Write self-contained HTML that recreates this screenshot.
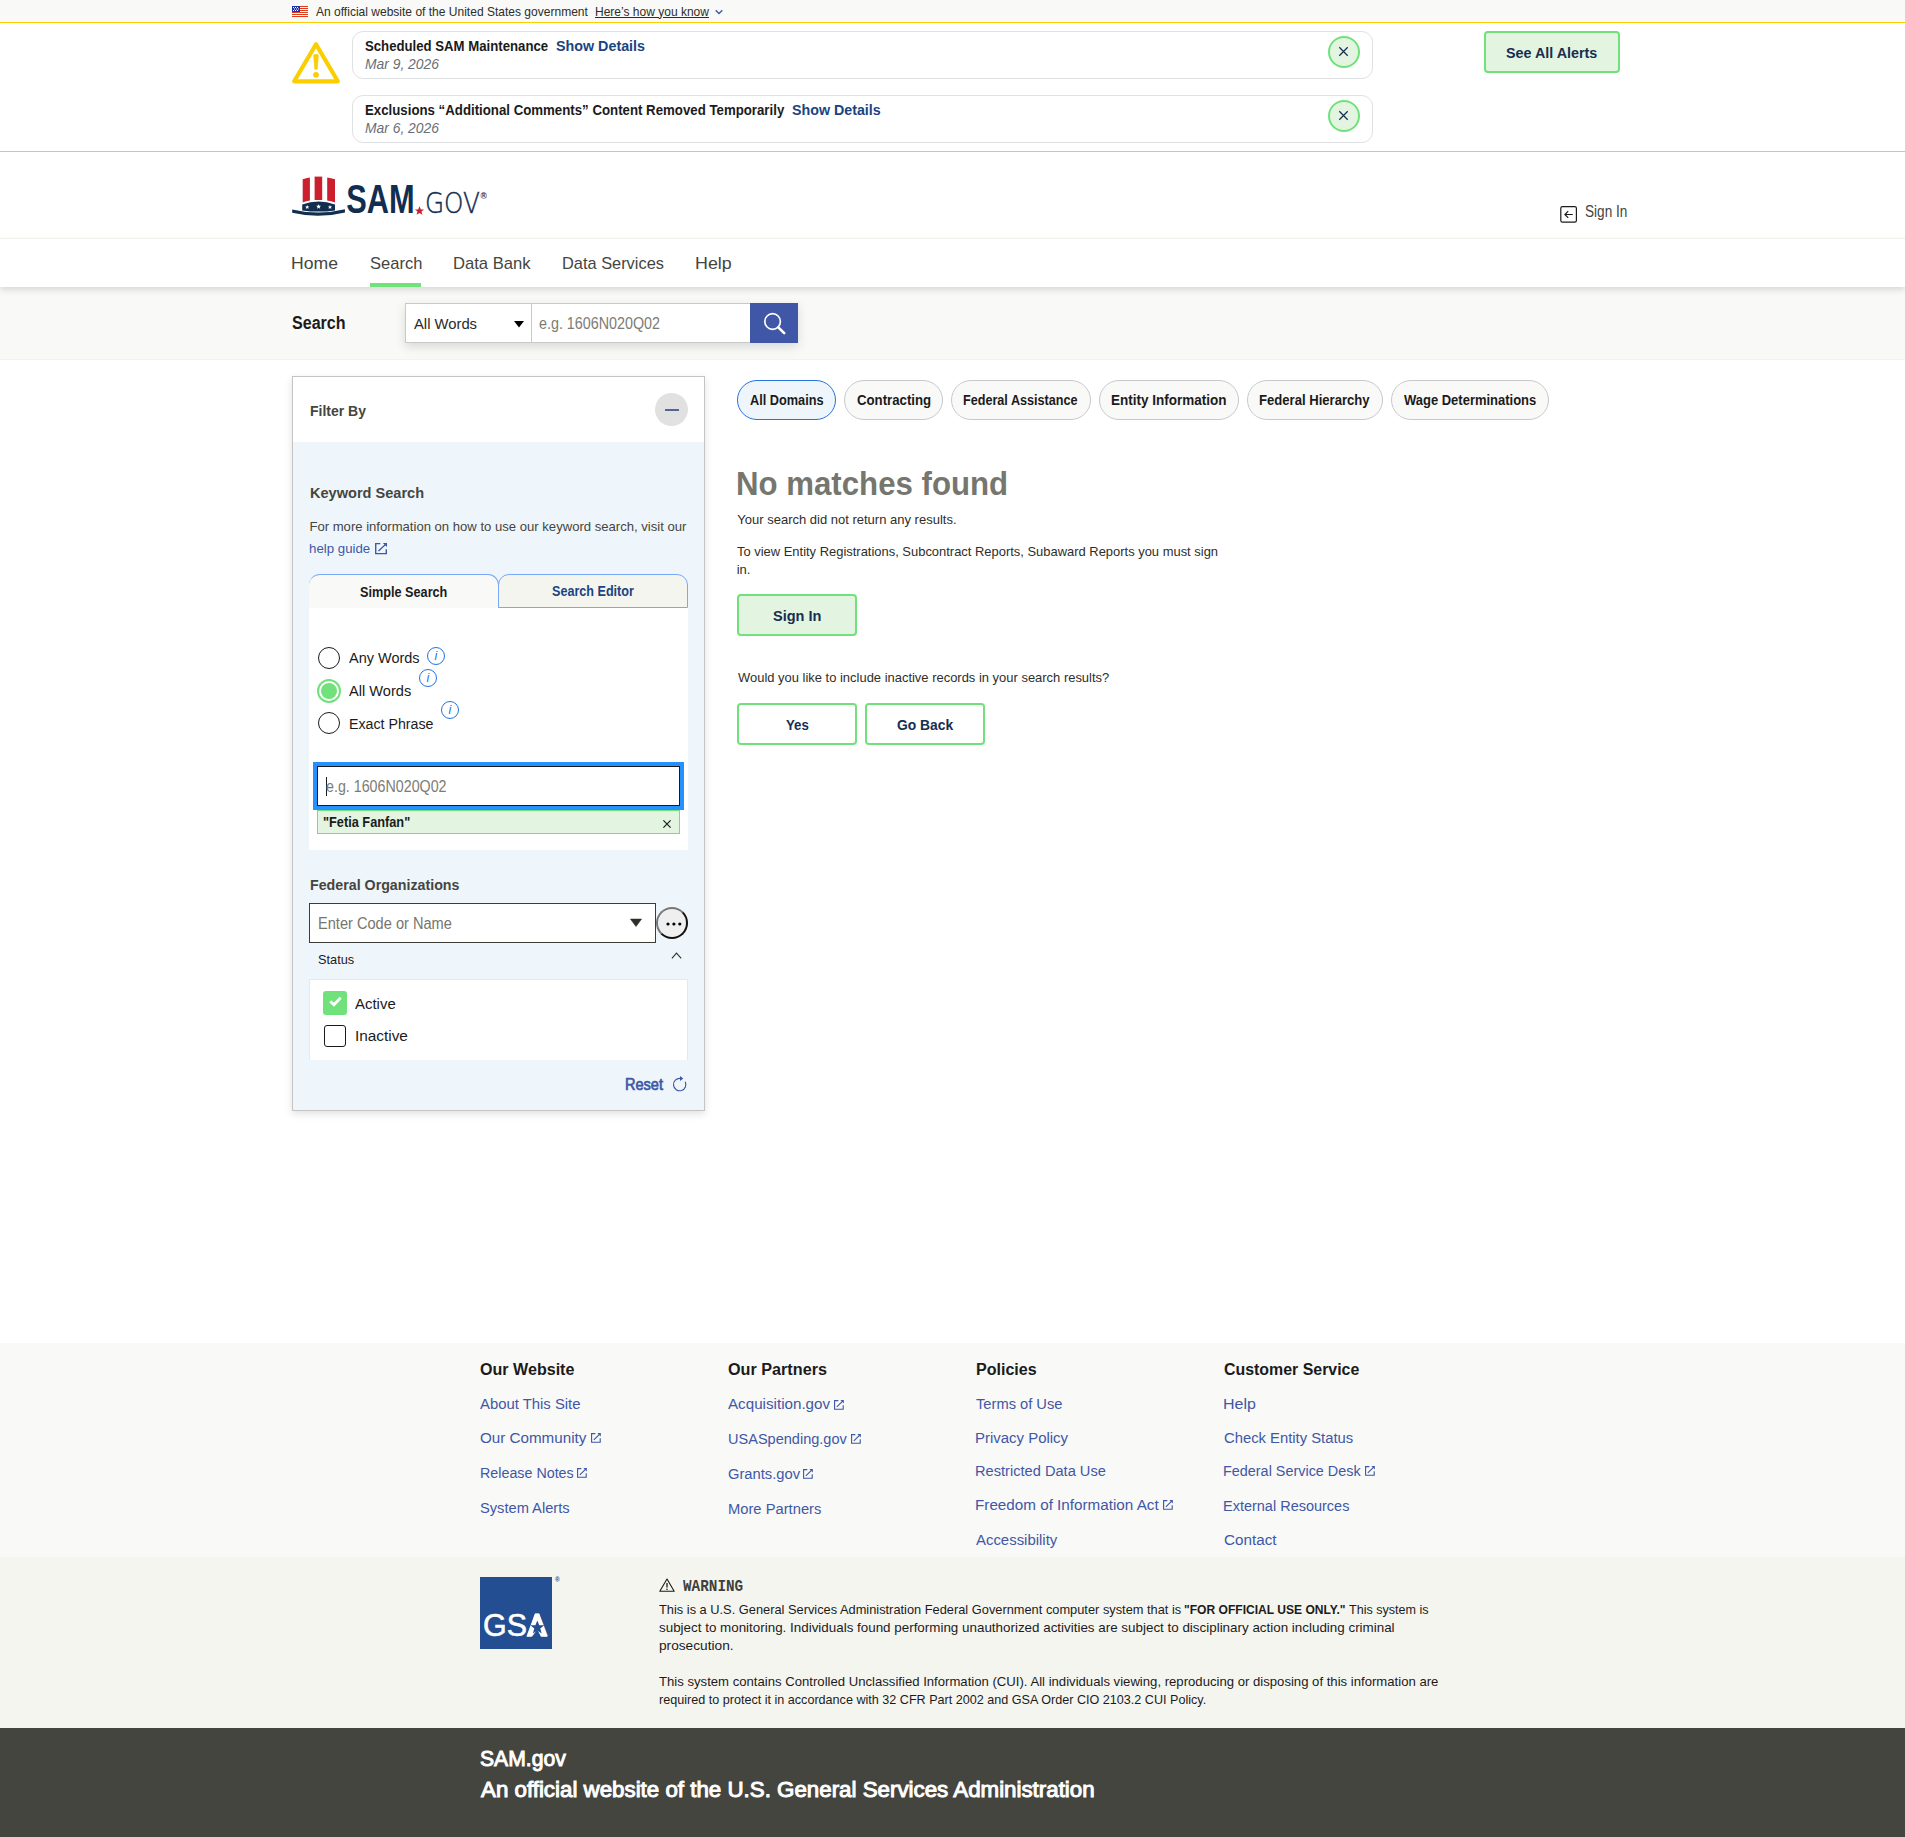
<!DOCTYPE html><html lang="en"><head><meta charset="utf-8"><title>SAM.gov | Search</title><style>
*{box-sizing:border-box;margin:0;padding:0}
html,body{width:1905px;height:1837px;background:#fff;overflow:hidden}
body{position:relative;font-family:"Liberation Sans",sans-serif;color:#1b1b1b;-webkit-font-smoothing:antialiased}
.t{position:absolute;white-space:nowrap;display:block;transform-origin:0 50%}
.a{position:absolute;display:block}
a{color:inherit;text-decoration:none}
button{font-family:inherit;border:0;background:none}
svg{position:absolute;overflow:visible}
ul{list-style:none}
</style></head><body><section aria-label="Official government website"><div class="a"  style="left:0px;top:0px;width:1905px;height:22px;background:#f9f9f7"></div><svg style="left:292px;top:6px" width="16" height="11" viewBox="0 0 16 11">
<rect width="16" height="11" fill="#fff"/>
<g fill="#db3e1f"><rect y="0" width="16" height="1"/><rect y="2" width="16" height="1"/><rect y="4" width="16" height="1"/><rect y="6" width="16" height="1"/><rect y="8" width="16" height="1"/><rect y="10" width="16" height="1"/></g>
<rect width="8" height="6" fill="#1e33b1"/>
<g fill="#fff"><rect x="1" y="1" width="1" height="1"/><rect x="3" y="1" width="1" height="1"/><rect x="5" y="1" width="1" height="1"/><rect x="2" y="2.5" width="1" height="1"/><rect x="4" y="2.5" width="1" height="1"/><rect x="6" y="2.5" width="1" height="1"/><rect x="1" y="4" width="1" height="1"/><rect x="3" y="4" width="1" height="1"/><rect x="5" y="4" width="1" height="1"/></g>
</svg><p class="t"  style="left:315.98px;top:3.53px;line-height:16px;font-size:12.9px;font-weight:400;color:#2e2e2a;transform:scaleX(0.9330);">An official website of the United States government</p><button class="t"  style="left:595.01px;top:3.53px;line-height:16px;font-size:12.9px;font-weight:400;color:#2e2e2a;transform:scaleX(0.9319);text-decoration:underline;text-underline-offset:1px;">Here’s how you know</button><svg style="left:715.3px;top:9px" width="8" height="6" viewBox="0 0 8 6"><path d="M0.7 1.2 L4 4.5 L7.3 1.2" fill="none" stroke="#3f57a6" stroke-width="1.3"/></svg></section><section aria-label="Alerts"><div class="a"  style="left:0px;top:22px;width:1905px;height:1px;background:#face00"></div><div class="a"  style="left:0px;top:151px;width:1905px;height:1px;background:#face00"></div><svg style="left:292px;top:41px" width="48" height="43" viewBox="0 0 48 43">
<path d="M24 3.3 L45.8 40.3 H2.2 Z" fill="none" stroke="#face00" stroke-width="4.2" stroke-linejoin="round"/>
<path d="M21.6 14 Q24 12.6 26.4 14 L25.3 28 Q24 28.8 22.7 28 Z" fill="#face00" stroke="#face00" stroke-width="0.6" stroke-linejoin="round"/><circle cx="24" cy="33.8" r="2.9" fill="#face00"/></svg><div class="a"  style="left:352px;top:31px;width:1021px;height:48px;border:1px solid #dfe1e2;border-radius:11px;background:#fff"></div><strong class="t"  style="left:365.12px;top:36.94px;line-height:18px;font-size:14.6px;font-weight:700;color:#1b1b1b;transform:scaleX(0.9031);">Scheduled SAM Maintenance</strong><a class="t" href="#" style="left:556.09px;top:36.94px;line-height:18px;font-size:14.6px;font-weight:700;color:#1a4480;transform:scaleX(0.9799);">Show Details</a><em class="t"  style="left:365.07px;top:54.94px;line-height:18px;font-size:14.6px;font-weight:400;font-style:italic;color:#696e76;transform:scaleX(0.9493);">Mar 9, 2026</em><button class="a" aria-label="Close" style="left:1328px;top:36px;width:32px;height:32px;border:2px solid #70e17b;border-radius:50%;background:#e3f5e1"><svg style="left:8.8px;top:8.7px" width="9" height="9" viewBox="0 0 9 9"><path d="M0.3 0.3 L8.7 8.7 M8.7 0.3 L0.3 8.7" stroke="#162e51" stroke-width="1.25"/></svg></button><div class="a"  style="left:352px;top:95px;width:1021px;height:48px;border:1px solid #dfe1e2;border-radius:11px;background:#fff"></div><strong class="t"  style="left:364.61px;top:100.94px;line-height:18px;font-size:14.6px;font-weight:700;color:#1b1b1b;transform:scaleX(0.9076);">Exclusions “Additional Comments” Content Removed Temporarily</strong><a class="t" href="#" style="left:792.39px;top:100.94px;line-height:18px;font-size:14.6px;font-weight:700;color:#1a4480;transform:scaleX(0.9765);">Show Details</a><em class="t"  style="left:365.07px;top:118.94px;line-height:18px;font-size:14.6px;font-weight:400;font-style:italic;color:#696e76;transform:scaleX(0.9493);">Mar 6, 2026</em><button class="a" aria-label="Close" style="left:1328px;top:100px;width:32px;height:32px;border:2px solid #70e17b;border-radius:50%;background:#e3f5e1"><svg style="left:8.8px;top:8.7px" width="9" height="9" viewBox="0 0 9 9"><path d="M0.3 0.3 L8.7 8.7 M8.7 0.3 L0.3 8.7" stroke="#162e51" stroke-width="1.25"/></svg></button><button class="a"  style="left:1484px;top:31px;width:136px;height:42px;border:2px solid #70e17b;border-radius:4px;background:#e3f5e1"></button><span class="t"  style="left:1506.29px;top:43.67px;line-height:18px;font-size:14.8px;font-weight:700;color:#162e51;transform:scaleX(0.9675);">See All Alerts</span></section><header><a href="#" aria-label="SAM.gov"><svg style="left:292px;top:176px" width="196" height="40" viewBox="0 0 196 40">
<g fill="#cc1f2d"><path d="M10.7 3.3 Q14 1.8 17.9 1.4 V24.4 Q14 24.9 10.7 26.4 Z"/><path d="M22.6 0.6 H30.2 V24 H22.6 Z"/><path d="M35.2 1.4 Q39 1.8 43 3.3 V26.4 Q39 24.9 35.2 24.4 Z"/></g>
<path d="M10.2 28.6 Q26.6 22.4 43 28.6 V34.4 Q26.6 36.8 10.2 34.4 Z" fill="#112e51"/>
<path d="M0.2 33.4 Q26.6 39.8 52.9 33.3 L53 36.4 Q26.6 43 0.2 36.8 Z" fill="#112e51"/>
<g fill="#fff"><path d="M0 -2.1 L0.62 -0.65 L2.1 -0.65 L0.95 0.3 L1.35 1.8 L0 0.9 L-1.35 1.8 L-0.95 0.3 L-2.1 -0.65 L-0.62 -0.65 Z" transform="translate(15.2 31.2)"/><path d="M0 -2.1 L0.62 -0.65 L2.1 -0.65 L0.95 0.3 L1.35 1.8 L0 0.9 L-1.35 1.8 L-0.95 0.3 L-2.1 -0.65 L-0.62 -0.65 Z" transform="translate(26.6 30.6) scale(1.15)"/><path d="M0 -2.1 L0.62 -0.65 L2.1 -0.65 L0.95 0.3 L1.35 1.8 L0 0.9 L-1.35 1.8 L-0.95 0.3 L-2.1 -0.65 L-0.62 -0.65 Z" transform="translate(38 31.2)"/></g>
<text x="54.3" y="36.6" font-family="Liberation Sans, sans-serif" font-weight="700" font-size="39.8" fill="#112e51" textLength="68.4" lengthAdjust="spacingAndGlyphs">SAM</text>
<path d="M0 -4.6 L1.3 -1.45 L4.6 -1.45 L2 0.6 L2.9 3.9 L0 2 L-2.9 3.9 L-2 0.6 L-4.6 -1.45 L-1.3 -1.45 Z" transform="translate(127.5 34.9)" fill="#cc1f2d"/>
<text x="133" y="36.9" font-family="DejaVu Sans, sans-serif" font-weight="200" font-size="28.5" fill="#112e51" stroke="#112e51" stroke-width="0.45" textLength="55" lengthAdjust="spacingAndGlyphs">GOV</text>
<text x="188.6" y="23.4" font-family="Liberation Sans, sans-serif" font-size="8.5" font-weight="700" fill="#112e51">®</text>
</svg></a><svg style="left:1560px;top:206px" width="18" height="18" viewBox="0 0 18 18"><rect x="0.8" y="0.6" width="15.6" height="15.6" rx="1.6" fill="none" stroke="#1b1b1b" stroke-width="1.2"/><path d="M12.8 8.5 H5 M8.2 5.2 L4.9 8.5 L8.2 11.8" fill="none" stroke="#1b1b1b" stroke-width="1.2"/></svg><a class="t" href="#" style="left:1585.38px;top:202.02px;line-height:20px;font-size:15.8px;font-weight:400;color:#454540;transform:scaleX(0.8601);">Sign In</a><div class="a"  style="left:0px;top:238px;width:1905px;height:1px;background:#f3f3ee"></div></header><div class="a"  style="left:0px;top:287px;width:1905px;height:73px;background:#f9f9f7;border-bottom:1px solid #f3f3ee"></div><nav><div class="a"  style="left:0px;top:239px;width:1905px;height:48px;background:#fff;box-shadow:0 3px 6px rgba(0,0,0,.13)"></div><a class="t" href="#" style="left:291.06px;top:252.81px;line-height:21px;font-size:17px;font-weight:400;color:#454540;transform:scaleX(1.0359);">Home</a><a class="t" href="#" style="left:369.50px;top:252.81px;line-height:21px;font-size:17px;font-weight:400;color:#454540;transform:scaleX(0.9714);">Search</a><a class="t" href="#" style="left:452.64px;top:252.81px;line-height:21px;font-size:17px;font-weight:400;color:#454540;transform:scaleX(0.9774);">Data Bank</a><a class="t" href="#" style="left:561.91px;top:252.81px;line-height:21px;font-size:17px;font-weight:400;color:#454540;transform:scaleX(0.9633);">Data Services</a><a class="t" href="#" style="left:694.54px;top:252.81px;line-height:21px;font-size:17px;font-weight:400;color:#454540;transform:scaleX(1.0501);">Help</a><div class="a"  style="left:370px;top:283px;width:51px;height:4px;background:#70e17b"></div></nav><section aria-label="Search"><label class="t"  style="left:291.94px;top:312.40px;line-height:22px;font-size:17.6px;font-weight:700;color:#1b1b1b;transform:scaleX(0.9127);">Search</label><div class="a"  style="left:405px;top:303px;width:393px;height:40px;box-shadow:0 4px 10px rgba(0,0,0,.13);background:#fff"></div><div class="a"  style="left:405px;top:303px;width:127px;height:40px;border:1px solid #c9c9c9;background:#fff"></div><span class="t"  style="left:413.97px;top:315.07px;line-height:18px;font-size:14.8px;font-weight:400;color:#2a2a2a;">All Words</span><svg style="left:514px;top:321.2px" width="10" height="7" viewBox="0 0 10 7"><path d="M0 0 H10 L5 6.4 Z" fill="#000"/></svg><div class="a"  style="left:531px;top:303px;width:220px;height:40px;border:1px solid #c9c9c9;background:#fff"></div><span class="t"  style="left:539.39px;top:313.79px;line-height:20px;font-size:15.6px;font-weight:400;color:#7c7c75;transform:scaleX(0.9176);">e.g. 1606N020Q02</span><button class="a" aria-label="Search" style="left:750px;top:303px;width:48px;height:40px;background:#3f57a6"><svg style="left:0;top:0" width="48" height="40" viewBox="0 0 48 40"><circle cx="22.6" cy="18.5" r="7.8" fill="none" stroke="#fff" stroke-width="1.7"/><path d="M28.3 24.3 L34.2 30.2" stroke="#fff" stroke-width="2.6" stroke-linecap="round"/></svg></button></section><aside aria-label="Filters"><div class="a"  style="left:292px;top:376px;width:413px;height:735px;border:1px solid #c4c4c4;background:#eff6fb;box-shadow:0 3px 8px rgba(0,0,0,.12)"></div><div class="a"  style="left:293px;top:377px;width:411px;height:65px;background:#fff"></div><h2 class="t"  style="left:309.56px;top:402.24px;line-height:18px;font-size:14.6px;font-weight:700;color:#454540;transform:scaleX(0.9593);">Filter By</h2><button class="a" aria-label="Collapse" style="left:655px;top:393px;width:33px;height:33px;border-radius:50%;background:#e1e1e1"><svg style="left:9.5px;top:15.5px" width="14" height="2" viewBox="0 0 14 2"><path d="M0 1 H14" stroke="#14336b" stroke-width="1.4"/></svg></button><h3 class="t"  style="left:309.53px;top:484.20px;line-height:18px;font-size:14.7px;font-weight:700;color:#454540;transform:scaleX(0.9911);">Keyword Search</h3><p><span class="t"  style="left:309.43px;top:518.76px;line-height:16px;font-size:13.1px;font-weight:400;color:#454540;">For more information on how to use our keyword search, visit our</span><a class="t" href="#" style="left:309.38px;top:540.66px;line-height:16px;font-size:13.1px;font-weight:400;color:#3f57a6;transform:scaleX(1.0129);">help guide</a><svg style="left:375px;top:542.8px;color:#3f57a6" width="12" height="11.4" viewBox="0 0 10 10" preserveAspectRatio="none"><path d="M4.4 0.6 H0.6 V9.4 H9.4 V5.4 M2.9 7.1 L8.6 1.4" fill="none" stroke="currentColor" stroke-width="1.15"/><path d="M6.5 0 H10 V3.5 Z" fill="currentColor"/></svg></p><div class="a"  style="left:309px;top:607px;width:379px;height:243px;background:#fff"></div><div class="a"  style="left:309px;top:574px;width:190px;height:34px;border-top:1px solid #7aa7f8;border-right:1px solid #7aa7f8;border-radius:11px 11px 0 0;background:#f9f9f7"></div><div class="a"  style="left:498px;top:574px;width:190px;height:34px;border:1px solid #7aa7f8;border-radius:11px 11px 0 0;background:#f5f5f0"></div><button class="t"  style="left:359.73px;top:582.75px;line-height:18px;font-size:14px;font-weight:700;color:#1b1b1b;transform:scaleX(0.9053);">Simple Search</button><button class="t"  style="left:552.14px;top:582.15px;line-height:18px;font-size:14px;font-weight:700;color:#1a4480;transform:scaleX(0.8992);">Search Editor</button><div class="a"  style="left:318px;top:647px;width:22px;height:22px;border:1.4px solid #1b1b1b;border-radius:50%;background:#fff"></div><label class="t"  style="left:349.27px;top:647.96px;line-height:19px;font-size:15.4px;font-weight:400;color:#1b1b1b;transform:scaleX(0.9409);">Any Words</label><svg style="left:427.4px;top:647.4px" width="18" height="18" viewBox="0 0 18 18"><circle cx="9" cy="9" r="8.5" fill="none" stroke="#2672de" stroke-width="1"/><text x="8.8" y="13.2" text-anchor="middle" font-family="Liberation Sans, sans-serif" font-style="italic" font-size="12.6" fill="#2672de">i</text></svg><div class="a"  style="left:317px;top:679px;width:24px;height:24px;border:2px solid #70e17b;border-radius:50%;background:#fff"></div><div class="a"  style="left:321px;top:683px;width:16px;height:16px;border-radius:50%;background:#70e17b"></div><label class="t"  style="left:349.27px;top:680.96px;line-height:19px;font-size:15.4px;font-weight:400;color:#1b1b1b;transform:scaleX(0.9495);">All Words</label><svg style="left:419.3px;top:668.7px" width="18" height="18" viewBox="0 0 18 18"><circle cx="9" cy="9" r="8.5" fill="none" stroke="#2672de" stroke-width="1"/><text x="8.8" y="13.2" text-anchor="middle" font-family="Liberation Sans, sans-serif" font-style="italic" font-size="12.6" fill="#2672de">i</text></svg><div class="a"  style="left:318px;top:712px;width:22px;height:22px;border:1.4px solid #1b1b1b;border-radius:50%;background:#fff"></div><label class="t"  style="left:349.23px;top:714.06px;line-height:19px;font-size:15.4px;font-weight:400;color:#1b1b1b;transform:scaleX(0.9231);">Exact Phrase</label><svg style="left:441.2px;top:701.3px" width="18" height="18" viewBox="0 0 18 18"><circle cx="9" cy="9" r="8.5" fill="none" stroke="#2672de" stroke-width="1"/><text x="8.8" y="13.2" text-anchor="middle" font-family="Liberation Sans, sans-serif" font-style="italic" font-size="12.6" fill="#2672de">i</text></svg><div class="a"  style="left:313px;top:762px;width:371px;height:48px;background:#2491ff"></div><div class="a"  style="left:317px;top:766px;width:363px;height:40px;border:1px solid #1b1b1b;background:#fff"></div><div class="a"  style="left:326px;top:777px;width:1px;height:19px;background:#1b1b1b"></div><span class="t"  style="left:325.59px;top:776.59px;line-height:20px;font-size:15.6px;font-weight:400;color:#7c7c75;transform:scaleX(0.9145);">e.g. 1606N020Q02</span><div class="a"  style="left:317px;top:810px;width:363px;height:24px;border:1px solid #70e17b;background:#e3f5e1"></div><span class="t"  style="left:322.56px;top:813.15px;line-height:18px;font-size:14px;font-weight:700;color:#1b1b1b;transform:scaleX(0.9107);">"Fetia Fanfan"</span><svg style="left:663px;top:819.5px" width="8" height="8" viewBox="0 0 8 8"><path d="M0.4 0.4 L7.6 7.6 M7.6 0.4 L0.4 7.6" stroke="#1b1b1b" stroke-width="1.2"/></svg><h3 class="t"  style="left:309.65px;top:876.01px;line-height:18px;font-size:14.4px;font-weight:700;color:#454540;transform:scaleX(0.9887);">Federal Organizations</h3><div class="a"  style="left:309px;top:903px;width:347px;height:40px;border:1px solid #3d3d38;background:#fff"></div><span class="t"  style="left:318.40px;top:913.69px;line-height:20px;font-size:15.6px;font-weight:400;color:#76766e;transform:scaleX(0.9359);">Enter Code or Name</span><svg style="left:630px;top:919px" width="12" height="8" viewBox="0 0 12 8"><path d="M0.4 0 H11.6 L6 7.6 Z" fill="#2e2e2a" stroke="#2e2e2a" stroke-width="0.5" stroke-linejoin="round"/></svg><button class="a" aria-label="Advanced" style="left:656px;top:907px;width:32px;height:32px;border:2px solid;border-color:#777 #111 #111 #777;border-radius:50%;background:#efefef"><svg style="left:7.6px;top:13.4px" width="16" height="4" viewBox="0 0 16 4"><circle cx="2" cy="2" r="1.6" fill="#000"/><circle cx="7.9" cy="2" r="1.6" fill="#000"/><circle cx="13.8" cy="2" r="1.6" fill="#000"/></svg></button><h4 class="t"  style="left:317.52px;top:951.73px;line-height:16px;font-size:12.9px;font-weight:400;color:#1b1b1b;transform:scaleX(0.9889);font-weight:400;">Status</h4><svg style="left:671px;top:952px" width="12" height="8" viewBox="0 0 12 8"><path d="M0.9 6.3 L5.5 1.2 L10.2 6.3" fill="none" stroke="#33332e" stroke-width="1.15"/></svg><div class="a"  style="left:309px;top:979px;width:379px;height:81px;background:#fff;border:1px solid #e8e8e8;border-bottom:0"></div><div class="a"  style="left:323px;top:991px;width:24px;height:24px;border-radius:3px;background:#70e17b"><svg style="left:5.5px;top:5.3px" width="13" height="11" viewBox="0 0 13 11"><path d="M1.3 5.3 L4.9 8.7 L11.7 1.7" fill="none" stroke="#fff" stroke-width="2.8"/></svg></div><label class="t"  style="left:354.97px;top:994.16px;line-height:19px;font-size:15.4px;font-weight:400;color:#1b1b1b;transform:scaleX(0.9710);">Active</label><div class="a"  style="left:324px;top:1025px;width:22px;height:22px;border:1.5px solid #1b1b1b;border-radius:3px;background:#fff"></div><label class="t"  style="left:354.88px;top:1025.96px;line-height:19px;font-size:15.4px;font-weight:400;color:#1b1b1b;">Inactive</label><button class="t"  style="left:625.01px;top:1075.22px;line-height:20px;font-size:15.8px;font-weight:400;color:#3f57a6;transform:scaleX(0.9209);-webkit-text-stroke:0.7px #3f57a6;">Reset</button><svg style="left:672px;top:1075px" width="16" height="18" viewBox="0 0 16 18"><path d="M8.3 3.4 A6.2 6.2 0 1 0 13.2 6.7" fill="none" stroke="#3f57a6" stroke-width="1.15"/><path d="M8 1.1 L11.3 3.6 L8 5.9 Z" fill="#3f57a6"/></svg></aside><main><button class="a"  style="left:737px;top:380px;width:99px;height:40px;border:1px solid #2672de;background:#eff6fb;border-radius:20px"></button><span class="t"  style="left:749.98px;top:391.15px;line-height:18px;font-size:14px;font-weight:700;color:#1b1b1b;transform:scaleX(0.9090);">All Domains</span><button class="a"  style="left:844px;top:380px;width:99px;height:40px;border:1px solid #c6cace;background:#f9f9f7;border-radius:20px"></button><span class="t"  style="left:856.76px;top:391.15px;line-height:18px;font-size:14px;font-weight:700;color:#1b1b1b;transform:scaleX(0.9437);">Contracting</span><button class="a"  style="left:951px;top:380px;width:140px;height:40px;border:1px solid #c6cace;background:#f9f9f7;border-radius:20px"></button><span class="t"  style="left:963.46px;top:391.15px;line-height:18px;font-size:14px;font-weight:700;color:#1b1b1b;transform:scaleX(0.9009);">Federal Assistance</span><button class="a"  style="left:1099px;top:380px;width:140px;height:40px;border:1px solid #c6cace;background:#f9f9f7;border-radius:20px"></button><span class="t"  style="left:1111.40px;top:391.15px;line-height:18px;font-size:14px;font-weight:700;color:#1b1b1b;transform:scaleX(0.9638);">Entity Information</span><button class="a"  style="left:1247px;top:380px;width:136px;height:40px;border:1px solid #c6cace;background:#f9f9f7;border-radius:20px"></button><span class="t"  style="left:1259.42px;top:391.15px;line-height:18px;font-size:14px;font-weight:700;color:#1b1b1b;transform:scaleX(0.9354);">Federal Hierarchy</span><button class="a"  style="left:1391px;top:380px;width:158px;height:40px;border:1px solid #c6cace;background:#f9f9f7;border-radius:20px"></button><span class="t"  style="left:1404.29px;top:391.15px;line-height:18px;font-size:14px;font-weight:700;color:#1b1b1b;transform:scaleX(0.9273);">Wage Determinations</span><h1 class="t"  style="left:736.31px;top:463.53px;line-height:41px;font-size:32.5px;font-weight:700;color:#76766e;transform:scaleX(0.9600);">No matches found</h1><p class="t"  style="left:737.31px;top:511.79px;line-height:16px;font-size:13px;font-weight:400;color:#2e2e2a;">Your search did not return any results.</p><p><span class="t"  style="left:737.31px;top:543.69px;line-height:16px;font-size:13px;font-weight:400;color:#2e2e2a;transform:scaleX(0.9951);">To view Entity Registrations, Subcontract Reports, Subaward Reports you must sign</span><span class="t"  style="left:736.73px;top:561.69px;line-height:16px;font-size:13px;font-weight:400;color:#2e2e2a;">in.</span></p><button class="a"  style="left:737px;top:594px;width:120px;height:42px;border:2px solid #70e17b;border-radius:4px;background:#e3f5e1"></button><span class="t"  style="left:773.48px;top:606.16px;line-height:19px;font-size:15.4px;font-weight:700;color:#162e51;transform:scaleX(0.9419);">Sign In</span><p class="t"  style="left:737.54px;top:669.69px;line-height:16px;font-size:13px;font-weight:400;color:#2e2e2a;transform:scaleX(0.9963);">Would you like to include inactive records in your search results?</p><button class="a"  style="left:737px;top:703px;width:120px;height:42px;border:2px solid #70e17b;border-radius:4px;background:#fff"></button><span class="t"  style="left:786.07px;top:714.56px;line-height:19px;font-size:15.4px;font-weight:700;color:#162e51;transform:scaleX(0.8619);">Yes</span><button class="a"  style="left:865px;top:703px;width:120px;height:42px;border:2px solid #70e17b;border-radius:4px;background:#fff"></button><span class="t"  style="left:896.83px;top:714.56px;line-height:19px;font-size:15.4px;font-weight:700;color:#162e51;transform:scaleX(0.8993);">Go Back</span></main><footer><div class="a"  style="left:0px;top:1343px;width:1905px;height:214px;background:#f9f9f7"></div><div class="a"  style="left:0px;top:1557px;width:1905px;height:171px;background:#f5f5f0"></div><div class="a"  style="left:0px;top:1728px;width:1905px;height:109px;background:#454540"></div><section><h3 class="t"  style="left:479.94px;top:1359.48px;line-height:21px;font-size:16.8px;font-weight:700;color:#1b1b1b;transform:scaleX(0.9582);">Our Website</h3><ul><li><a class="t" href="#" style="left:479.97px;top:1393.96px;line-height:19px;font-size:15.4px;font-weight:400;color:#3f57a6;transform:scaleX(0.9657);">About This Site</a></li><li><a class="t" href="#" style="left:480.08px;top:1427.96px;line-height:19px;font-size:15.4px;font-weight:400;color:#3f57a6;transform:scaleX(0.9869);">Our Community</a><svg style="left:590.6px;top:1433.0px;color:#3f57a6" width="9.8" height="9.8" viewBox="0 0 10 10"><path d="M4.4 0.6 H0.6 V9.4 H9.4 V5.4 M2.9 7.1 L8.6 1.4" fill="none" stroke="currentColor" stroke-width="1.15"/><path d="M6.5 0 H10 V3.5 Z" fill="currentColor"/></svg></li><li><a class="t" href="#" style="left:479.63px;top:1462.96px;line-height:19px;font-size:15.4px;font-weight:400;color:#3f57a6;transform:scaleX(0.9281);">Release Notes</a><svg style="left:576.8px;top:1468.0px;color:#3f57a6" width="9.8" height="9.8" viewBox="0 0 10 10"><path d="M4.4 0.6 H0.6 V9.4 H9.4 V5.4 M2.9 7.1 L8.6 1.4" fill="none" stroke="currentColor" stroke-width="1.15"/><path d="M6.5 0 H10 V3.5 Z" fill="currentColor"/></svg></li><li><a class="t" href="#" style="left:480.13px;top:1497.96px;line-height:19px;font-size:15.4px;font-weight:400;color:#3f57a6;transform:scaleX(0.9522);">System Alerts</a></li></ul></section><section><h3 class="t"  style="left:728.24px;top:1359.48px;line-height:21px;font-size:16.8px;font-weight:700;color:#1b1b1b;transform:scaleX(0.9643);">Our Partners</h3><ul><li><a class="t" href="#" style="left:728.27px;top:1394.46px;line-height:19px;font-size:15.4px;font-weight:400;color:#3f57a6;transform:scaleX(0.9861);">Acquisition.gov</a><svg style="left:834.4px;top:1399.5px;color:#3f57a6" width="9.8" height="9.8" viewBox="0 0 10 10"><path d="M4.4 0.6 H0.6 V9.4 H9.4 V5.4 M2.9 7.1 L8.6 1.4" fill="none" stroke="currentColor" stroke-width="1.15"/><path d="M6.5 0 H10 V3.5 Z" fill="currentColor"/></svg></li><li><a class="t" href="#" style="left:727.98px;top:1429.16px;line-height:19px;font-size:15.4px;font-weight:400;color:#3f57a6;transform:scaleX(0.9443);">USASpending.gov</a><svg style="left:851.0px;top:1434.2px;color:#3f57a6" width="9.8" height="9.8" viewBox="0 0 10 10"><path d="M4.4 0.6 H0.6 V9.4 H9.4 V5.4 M2.9 7.1 L8.6 1.4" fill="none" stroke="currentColor" stroke-width="1.15"/><path d="M6.5 0 H10 V3.5 Z" fill="currentColor"/></svg></li><li><a class="t" href="#" style="left:727.56px;top:1464.16px;line-height:19px;font-size:15.4px;font-weight:400;color:#3f57a6;transform:scaleX(0.9577);">Grants.gov</a><svg style="left:803.4px;top:1469.2px;color:#3f57a6" width="9.8" height="9.8" viewBox="0 0 10 10"><path d="M4.4 0.6 H0.6 V9.4 H9.4 V5.4 M2.9 7.1 L8.6 1.4" fill="none" stroke="currentColor" stroke-width="1.15"/><path d="M6.5 0 H10 V3.5 Z" fill="currentColor"/></svg></li><li><a class="t" href="#" style="left:727.89px;top:1498.96px;line-height:19px;font-size:15.4px;font-weight:400;color:#3f57a6;transform:scaleX(0.9573);">More Partners</a></li></ul></section><section><h3 class="t"  style="left:975.53px;top:1359.48px;line-height:21px;font-size:16.8px;font-weight:700;color:#1b1b1b;transform:scaleX(0.9559);">Policies</h3><ul><li><a class="t" href="#" style="left:975.67px;top:1393.96px;line-height:19px;font-size:15.4px;font-weight:400;color:#3f57a6;transform:scaleX(0.9540);">Terms of Use</a></li><li><a class="t" href="#" style="left:974.77px;top:1427.96px;line-height:19px;font-size:15.4px;font-weight:400;color:#3f57a6;transform:scaleX(0.9715);">Privacy Policy</a></li><li><a class="t" href="#" style="left:974.80px;top:1461.16px;line-height:19px;font-size:15.4px;font-weight:400;color:#3f57a6;transform:scaleX(0.9502);">Restricted Data Use</a></li><li><a class="t" href="#" style="left:974.75px;top:1495.16px;line-height:19px;font-size:15.4px;font-weight:400;color:#3f57a6;transform:scaleX(0.9897);">Freedom of Information Act</a><svg style="left:1163.0px;top:1500.2px;color:#3f57a6" width="9.8" height="9.8" viewBox="0 0 10 10"><path d="M4.4 0.6 H0.6 V9.4 H9.4 V5.4 M2.9 7.1 L8.6 1.4" fill="none" stroke="currentColor" stroke-width="1.15"/><path d="M6.5 0 H10 V3.5 Z" fill="currentColor"/></svg></li><li><a class="t" href="#" style="left:975.97px;top:1529.76px;line-height:19px;font-size:15.4px;font-weight:400;color:#3f57a6;transform:scaleX(0.9695);">Accessibility</a></li></ul></section><section><h3 class="t"  style="left:1224.25px;top:1359.48px;line-height:21px;font-size:16.8px;font-weight:700;color:#1b1b1b;transform:scaleX(0.9481);">Customer Service</h3><ul><li><a class="t" href="#" style="left:1222.99px;top:1393.96px;line-height:19px;font-size:15.4px;font-weight:400;color:#3f57a6;transform:scaleX(1.0389);">Help</a></li><li><a class="t" href="#" style="left:1223.55px;top:1427.96px;line-height:19px;font-size:15.4px;font-weight:400;color:#3f57a6;transform:scaleX(0.9619);">Check Entity Status</a></li><li><a class="t" href="#" style="left:1223.12px;top:1461.16px;line-height:19px;font-size:15.4px;font-weight:400;color:#3f57a6;transform:scaleX(0.9357);">Federal Service Desk</a><svg style="left:1365.0px;top:1466.2px;color:#3f57a6" width="9.8" height="9.8" viewBox="0 0 10 10"><path d="M4.4 0.6 H0.6 V9.4 H9.4 V5.4 M2.9 7.1 L8.6 1.4" fill="none" stroke="currentColor" stroke-width="1.15"/><path d="M6.5 0 H10 V3.5 Z" fill="currentColor"/></svg></li><li><a class="t" href="#" style="left:1223.11px;top:1495.96px;line-height:19px;font-size:15.4px;font-weight:400;color:#3f57a6;transform:scaleX(0.9413);">External Resources</a></li><li><a class="t" href="#" style="left:1223.53px;top:1529.76px;line-height:19px;font-size:15.4px;font-weight:400;color:#3f57a6;transform:scaleX(0.9895);">Contact</a></li></ul></section><div class="a"  style="left:480px;top:1577px;width:72px;height:72px;background:#234e92"></div><span class="t"  style="left:483.47px;top:1604.91px;line-height:40px;font-size:32px;font-weight:400;color:#fff;transform:scaleX(0.9498);-webkit-text-stroke:0.6px #fff;">GSA</span><svg style="left:520px;top:1610px" width="32" height="30" viewBox="520 1610 32 30"><path d="M534.9 1613.6 H539 L547.3 1636.8 H526.6 Z" fill="#fff"/><path d="M0 -6.9 L1.9 -2.2 L6.9 -2.2 L3 1 L4.4 6 L0 3 L-4.4 6 L-3 1 L-6.9 -2.2 L-1.9 -2.2 Z" transform="translate(537.3 1627.4)" fill="#234e92"/><path d="M531.6 1637.2 L537.3 1629.5 L541.2 1637.2 Z" fill="#234e92"/></svg><span class="t"  style="left:554.90px;top:1576.35px;line-height:8px;font-size:6.5px;font-weight:700;color:#234e92;">®</span><svg style="left:659px;top:1578px" width="16" height="14" viewBox="0 0 16 14"><path d="M8 1 L15.2 13.3 H0.8 Z" fill="none" stroke="#1b1b1b" stroke-width="1.1" stroke-linejoin="round"/><path d="M8 5 V9.4" stroke="#1b1b1b" stroke-width="1.3"/><circle cx="8" cy="11.2" r="0.8" fill="#1b1b1b"/></svg><h4 class="t"  style="left:683.40px;top:1577.05px;line-height:20px;font-size:15.6px;font-weight:700;font-family:'Liberation Mono',monospace;color:#3f3f3b;transform:scaleX(0.9191);">WARNING</h4><p><span class="t"  style="left:659.21px;top:1601.62px;line-height:16px;font-size:13.2px;font-weight:400;color:#1b1b1b;transform:scaleX(0.9721);">This is a U.S. General Services Administration Federal Government computer system that is</span><strong class="t"  style="left:1184.40px;top:1601.62px;line-height:16px;font-size:13.2px;font-weight:700;color:#1b1b1b;transform:scaleX(0.9148);">"FOR OFFICIAL USE ONLY."</strong><span class="t"  style="left:1349.22px;top:1601.62px;line-height:16px;font-size:13.2px;font-weight:400;color:#1b1b1b;transform:scaleX(0.9522);">This system is</span><span class="t"  style="left:659.13px;top:1619.72px;line-height:16px;font-size:13.2px;font-weight:400;color:#1b1b1b;transform:scaleX(1.0157);">subject to monitoring. Individuals found performing unauthorized activities are subject to disciplinary action including criminal</span><span class="t"  style="left:658.62px;top:1637.62px;line-height:16px;font-size:13.2px;font-weight:400;color:#1b1b1b;transform:scaleX(1.0375);">prosecution.</span></p><p><span class="t"  style="left:659.20px;top:1674.02px;line-height:16px;font-size:13.2px;font-weight:400;color:#1b1b1b;transform:scaleX(0.9956);">This system contains Controlled Unclassified Information (CUI). All individuals viewing, reproducing or disposing of this information are</span><span class="t"  style="left:658.66px;top:1691.52px;line-height:16px;font-size:13.2px;font-weight:400;color:#1b1b1b;transform:scaleX(0.9550);">required to protect it in accordance with 32 CFR Part 2002 and GSA Order CIO 2103.2 CUI Policy.</span></p><p class="t"  style="left:479.74px;top:1744.63px;line-height:28px;font-size:22.4px;font-weight:400;color:#fff;transform:scaleX(0.9438);-webkit-text-stroke:1px #fff;">SAM.gov</p><p class="t"  style="left:480.66px;top:1775.53px;line-height:28px;font-size:22.4px;font-weight:400;color:#fff;transform:scaleX(0.9968);-webkit-text-stroke:1px #fff;">An official website of the U.S. General Services Administration</p></footer></body></html>
